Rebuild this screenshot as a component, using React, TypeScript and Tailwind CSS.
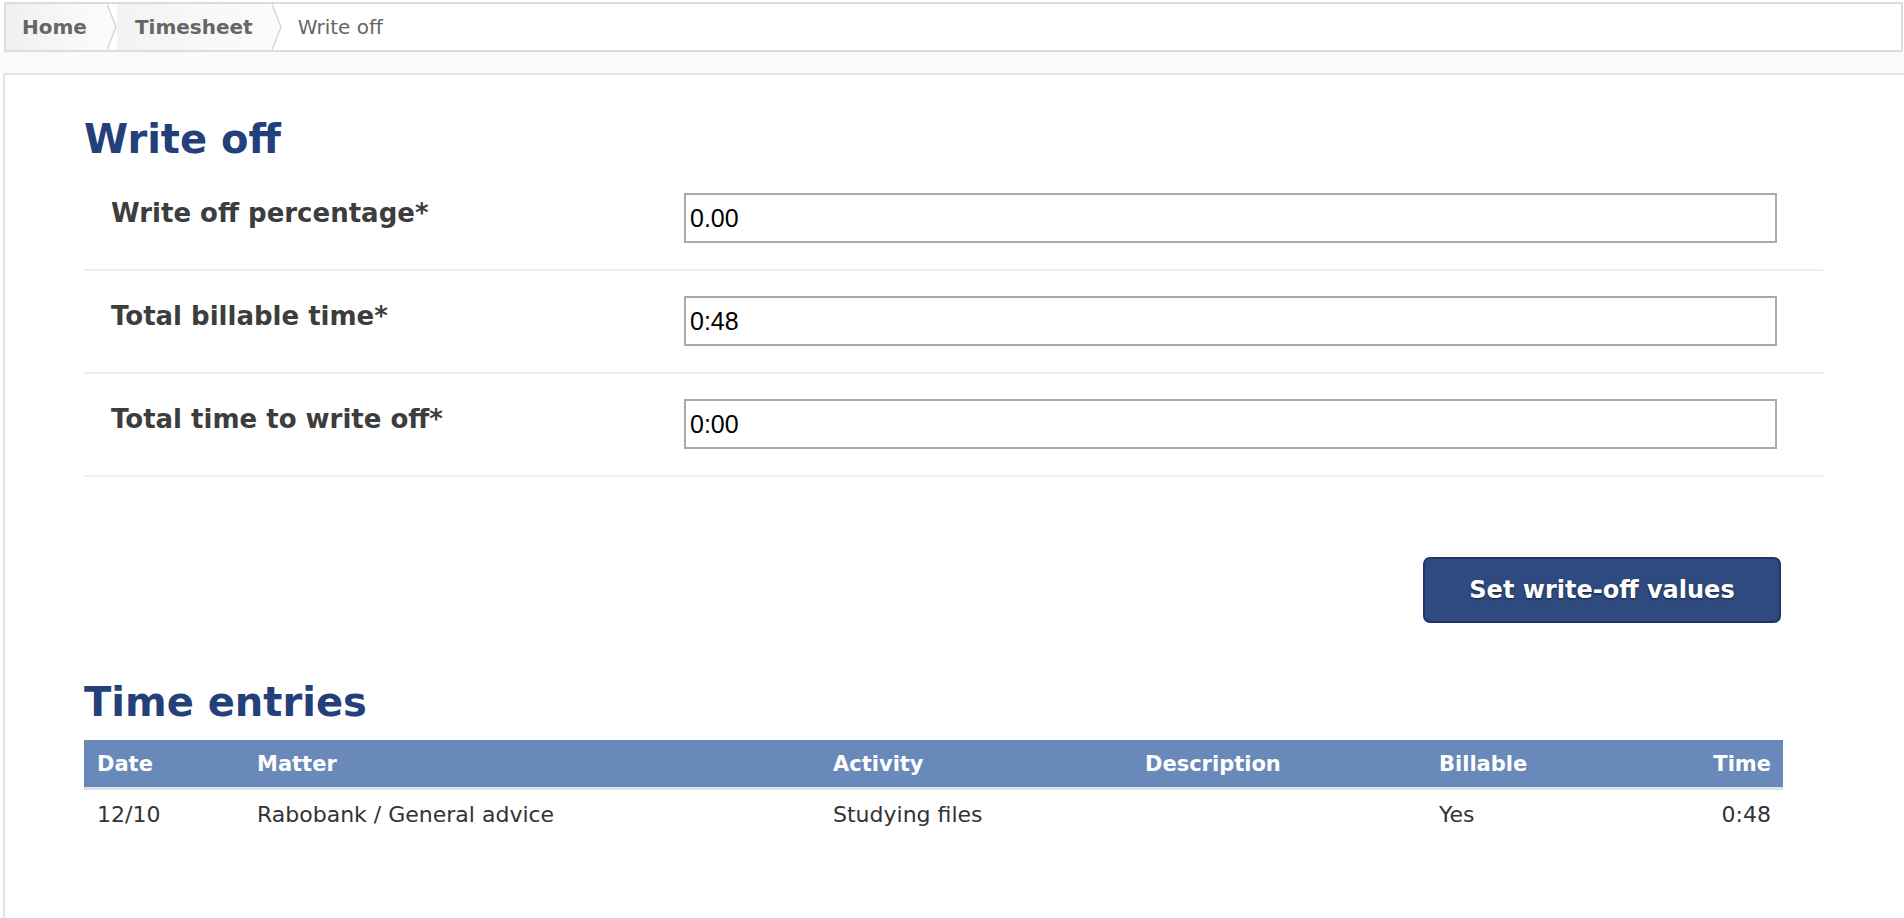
import React from 'react';

const fields = [
  { label: 'Write off percentage*', value: '0.00' },
  { label: 'Total billable time*', value: '0:48' },
  { label: 'Total time to write off*', value: '0:00' },
];

const entries = [
  { date: '12/10', matter: 'Rabobank / General advice', activity: 'Studying files', description: '', billable: 'Yes', time: '0:48' },
];

function Chevron() {
  return (
    <svg width="10" height="46" viewBox="0 0 10 46" className="shrink-0 block">
      <polygon points="0,0 9,23 0,46" fill="#fbfbfb" />
      <polyline points="0,0 9,23 0,46" fill="none" stroke="#d6d6d6" strokeWidth="1.5" />
    </svg>
  );
}

function Breadcrumb() {
  return (
    <div className="ml-[4px] mr-[1px] mt-[2px] h-[50px] border-2 border-[#dcdcdc] bg-white flex items-stretch text-[20px] text-[#666]">
      <div className="flex items-center pl-[16px] pr-[20px] font-bold bg-linear-to-r from-[#f0f0f0] to-[#fbfbfb]">Home</div>
      <Chevron />
      <div className="flex items-center pl-[18px] pr-[19px] font-bold bg-linear-to-r from-[#f3f3f3] to-[#fbfbfb]">Timesheet</div>
      <Chevron />
      <div className="flex items-center pl-[16px]">Write off</div>
    </div>
  );
}

export default function App() {
  return (
    <div className="min-h-[918px] bg-white font-['DejaVu_Sans',Verdana,sans-serif]">
      <Breadcrumb />
      <div className="h-[21px] bg-[#fafafa]" />
      <div className="ml-[3px] min-h-[845px] border-t-2 border-l-2 border-[#e2e2e2] bg-white pl-[79px] pt-[40px]">
        <h1 className="text-[40px] leading-[48px] font-bold text-[#24407a]">Write off</h1>

        <div className="mt-[5px] w-[1739px]">
          {fields.map(f => (
            <div key={f.label} className="grid grid-cols-[600px_1093px] border-b-2 border-[#eeeeee] pt-[25px] pb-[26px]">
              <label className="pl-[27px] pt-[5px] text-[26px] leading-[30px] font-bold text-[#3d3d3d]">{f.label}</label>
              <input
                type="text"
                defaultValue={f.value}
                className="h-[50px] w-full border-2 border-[#aaaaaa] bg-white px-[4px] text-[25px] text-black font-['Liberation_Sans',Arial,sans-serif] outline-none"
              />
            </div>
          ))}
        </div>

        <div className="w-[1697px] flex justify-end mt-[80px]">
          <button
            type="button"
            className="w-[358px] h-[66px] rounded-[7px] border-2 border-[#1f3564] bg-[#2e4a7e] text-white text-[24px] font-bold [text-shadow:0_1px_2px_rgba(0,0,0,0.5)]"
          >
            Set write-off values
          </button>
        </div>

        <h2 className="mt-[55px] text-[40px] leading-[48px] font-bold text-[#24407a]">Time entries</h2>

        <div className="mt-[14px] w-[1699px]">
          <div className="grid grid-cols-[160px_576px_312px_294px_1fr_auto] h-[47px] items-center bg-[#6889b9] text-white text-[21px] leading-[26px] font-bold border-b-[3px] border-[#dde1e8] box-content">
            <div className="pl-[13px]">Date</div>
            <div className="pl-[13px]">Matter</div>
            <div className="pl-[13px]">Activity</div>
            <div className="pl-[13px]">Description</div>
            <div className="pl-[13px]">Billable</div>
            <div className="pr-[12px] text-right">Time</div>
          </div>
          {entries.map(e => (
            <div key={e.date + e.matter} className="grid grid-cols-[160px_576px_312px_294px_1fr_auto] pt-[12px] pb-[12px] text-[22px] leading-[26px] text-[#333]">
              <div className="pl-[13px]">{e.date}</div>
              <div className="pl-[13px]">{e.matter}</div>
              <div className="pl-[13px]">{e.activity}</div>
              <div className="pl-[13px]">{e.description}</div>
              <div className="pl-[13px]">{e.billable}</div>
              <div className="pr-[12px] text-right">{e.time}</div>
            </div>
          ))}
        </div>
      </div>
    </div>
  );
}
